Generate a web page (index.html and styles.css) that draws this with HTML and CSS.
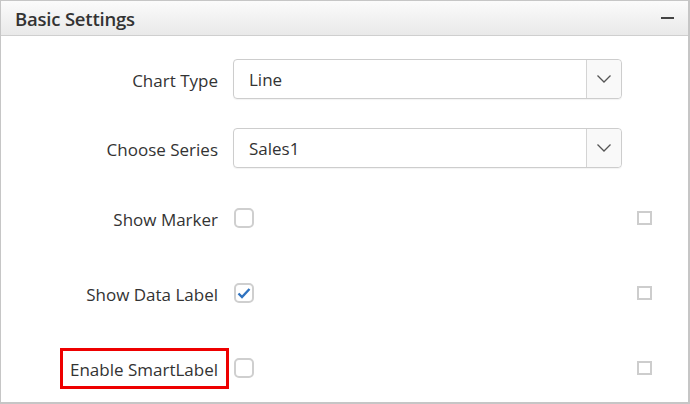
FILE: index.html
```html
<!DOCTYPE html>
<html>
<head>
<meta charset="utf-8">
<link rel="stylesheet" href="styles.css">
</head>
<body>
<div class="panel">
  <div class="header">
    <span class="title">Basic Settings</span>
    <span class="collapse"></span>
  </div>
  <div class="content">
    <div class="row">
      <div class="label">Chart Type</div>
      <div class="dropdown">
        <span class="value">Line</span>
        <span class="arrow"><svg width="16" height="10" viewBox="0 0 16 10"><path d="M1.5 1.5 L8 8 L14.5 1.5" fill="none" stroke="#555" stroke-width="1.3"/></svg></span>
      </div>
      <div></div>
    </div>
    <div class="row">
      <div class="label">Choose Series</div>
      <div class="dropdown">
        <span class="value">Sales1</span>
        <span class="arrow"><svg width="16" height="10" viewBox="0 0 16 10"><path d="M1.5 1.5 L8 8 L14.5 1.5" fill="none" stroke="#555" stroke-width="1.3"/></svg></span>
      </div>
      <div></div>
    </div>
    <div class="row check-row">
      <div class="label">Show Marker</div>
      <div class="cell"><span class="checkbox"></span></div>
      <span class="square"></span>
    </div>
    <div class="row check-row wide">
      <div class="label">Show Data Label</div>
      <div class="cell"><span class="checkbox"><svg width="14" height="12" viewBox="0 0 14 12"><path d="M1.5 6.5 L5 10 L12.5 2" fill="none" stroke="#2f73c0" stroke-width="2.4"/></svg></span></div>
      <span class="square"></span>
    </div>
    <div class="row check-row wide">
      <div class="label highlight-wrap"><span class="highlight"></span>Enable SmartLabel</div>
      <div class="cell"><span class="checkbox"></span></div>
      <span class="square"></span>
    </div>
  </div>
</div>
</body>
</html>
```
FILE: styles.css
```css
* { box-sizing: border-box; }
html, body { margin: 0; padding: 0; background: #fff; }
body {
  font-family: "Open Sans", "Noto Sans", sans-serif;
  color: #333;
  width: 690px;
  height: 404px;
  overflow: hidden;
}
.panel {
  width: 690px;
  height: 404px;
  border: 1px solid #c6c6c6;
  border-right-width: 2px;
  border-bottom-width: 2px;
  background: #fff;
}
.header {
  height: 35px;
  background: linear-gradient(#fbfbfb, #e9e9e9);
  border-bottom: 1px solid #cfcfcf;
  display: flex;
  align-items: center;
  justify-content: space-between;
  padding: 0 14px 0 14px;
}
.title {
  font-size: 18.5px;
  font-weight: 600;
  color: #333;
  letter-spacing: -0.2px;
}
.collapse {
  width: 13px;
  height: 2px;
  background: #444;
}
.content {
  padding-top: 23px;
  display: flex;
  flex-direction: column;
  gap: 29px;
}
.row {
  display: grid;
  grid-template-columns: 217px 389px 1fr;
  column-gap: 15px;
  align-items: center;
  height: 40px;
}
.check-row { margin-top: 1px; }
.wide { margin-top: 6px; }
.label {
  align-self: stretch;
  display: flex;
  align-items: center;
  justify-content: flex-end;
  padding-top: 2px;
  font-size: 17px;
  color: #333;
  white-space: nowrap;
}
.dropdown {
  height: 40px;
  border: 1px solid #cdcdcd;
  border-radius: 4px;
  display: flex;
  align-items: stretch;
  box-shadow: 0 1px 1px rgba(0,0,0,0.05);
}
.value {
  flex: 1;
  display: flex;
  align-items: center;
  padding-left: 15px;
  padding-top: 1px;
  font-size: 17px;
  color: #333;
}
.arrow {
  width: 35px;
  border-left: 1px solid #d4d4d4;
  background: #f9f9f9;
  border-radius: 0 4px 4px 0;
  display: flex;
  align-items: center;
  justify-content: center;
}
.cell { display: flex; align-items: center; }
.checkbox {
  width: 20px;
  height: 20px;
  border: 2px solid #cfcfcf;
  border-radius: 5px;
  display: flex;
  align-items: center;
  justify-content: center;
  margin-left: 1px;
}
.square {
  width: 15px;
  height: 14px;
  border: 2px solid #cdcdcd;
  margin-left: 0;
}
.highlight-wrap { position: relative; }
.highlight {
  position: absolute;
  left: 59px;
  right: -11px;
  top: 0;
  bottom: -1px;
  border: 3px solid #ee0000;
}
```
